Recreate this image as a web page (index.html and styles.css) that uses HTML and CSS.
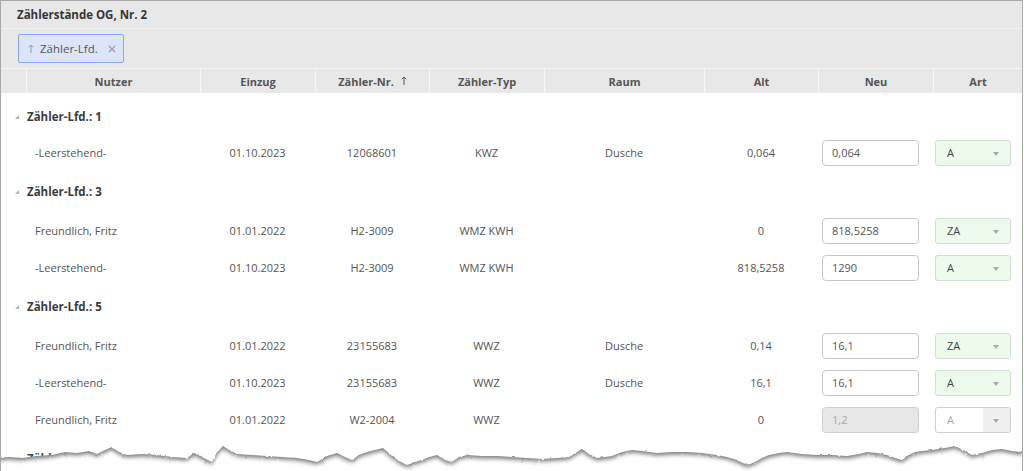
FILE: index.html
```html
<!DOCTYPE html>
<html lang="de">
<head>
<meta charset="utf-8">
<title>Zählerstände</title>
<link rel="stylesheet" href="styles.css">
</head>
<body>
<div class="sheet">
  <div class="title">Zählerstände OG, Nr. 2</div>
  <div class="groupbar">
    <span class="chip">
      <svg class="up" width="6" height="9" viewBox="0 0 6 9"><path d="M3 1 V9 M0.8 3.2 L3 1 L5.2 3.2" fill="none" stroke="#9a9a9a" stroke-width="1"/></svg>
      <span class="chip-label">Zähler-Lfd.</span>
      <svg class="x" width="8" height="8" viewBox="0 0 8 8"><path d="M1 1 L7 7 M7 1 L1 7" stroke="#a0a0a0" stroke-width="1.4"/></svg>
    </span>
  </div>
  <table class="grid">
    <colgroup>
      <col class="c0"><col class="c1"><col class="c2"><col class="c3"><col class="c4"><col class="c5"><col class="c6"><col class="c7"><col class="c8">
    </colgroup>
    <thead>
      <tr>
        <th class="first"></th>
        <th>Nutzer</th>
        <th>Einzug</th>
        <th>Zähler-Nr. <svg class="sort" width="6" height="9" viewBox="0 0 6 9"><path d="M3 1 V9 M0.8 3.2 L3 1 L5.2 3.2" fill="none" stroke="#555" stroke-width="1"/></svg></th>
        <th>Zähler-Typ</th>
        <th>Raum</th>
        <th>Alt</th>
        <th>Neu</th>
        <th>Art</th>
      </tr>
    </thead>
    <tbody>
      <tr class="grp top"><td colspan="9"><div class="gl"><span class="tri"></span>Zähler-Lfd.: 1</div></td></tr>
      <tr>
        <td></td><td class="name">-Leerstehend-</td><td>01.10.2023</td><td>12068601</td><td>KWZ</td><td>Dusche</td><td>0,064</td>
        <td class="neu"><div class="inp">0,064</div></td>
        <td class="art"><div class="sel"><span>A</span><span class="arrow"></span></div></td>
      </tr>
      <tr class="grp"><td colspan="9"><div class="gl"><span class="tri"></span>Zähler-Lfd.: 3</div></td></tr>
      <tr>
        <td></td><td class="name">Freundlich, Fritz</td><td>01.01.2022</td><td>H2-3009</td><td>WMZ KWH</td><td></td><td>0</td>
        <td class="neu"><div class="inp">818,5258</div></td>
        <td class="art"><div class="sel"><span>ZA</span><span class="arrow"></span></div></td>
      </tr>
      <tr>
        <td></td><td class="name">-Leerstehend-</td><td>01.10.2023</td><td>H2-3009</td><td>WMZ KWH</td><td></td><td>818,5258</td>
        <td class="neu"><div class="inp">1290</div></td>
        <td class="art"><div class="sel"><span>A</span><span class="arrow"></span></div></td>
      </tr>
      <tr class="grp"><td colspan="9"><div class="gl"><span class="tri"></span>Zähler-Lfd.: 5</div></td></tr>
      <tr>
        <td></td><td class="name">Freundlich, Fritz</td><td>01.01.2022</td><td>23155683</td><td>WWZ</td><td>Dusche</td><td>0,14</td>
        <td class="neu"><div class="inp">16,1</div></td>
        <td class="art"><div class="sel"><span>ZA</span><span class="arrow"></span></div></td>
      </tr>
      <tr>
        <td></td><td class="name">-Leerstehend-</td><td>01.10.2023</td><td>23155683</td><td>WWZ</td><td>Dusche</td><td>16,1</td>
        <td class="neu"><div class="inp">16,1</div></td>
        <td class="art"><div class="sel"><span>A</span><span class="arrow"></span></div></td>
      </tr>
      <tr>
        <td></td><td class="name">Freundlich, Fritz</td><td>01.01.2022</td><td>W2-2004</td><td>WWZ</td><td></td><td>0</td>
        <td class="neu"><div class="inp disabled">1,2</div></td>
        <td class="art"><div class="sel disabled"><span>A</span><span class="arrow"></span></div></td>
      </tr>
      <tr class="grp"><td colspan="9"><div class="gl"><span class="tri"></span>Zähler-Lfd.: 6</div></td></tr>
    </tbody>
  </table>
  <svg class="tear" width="1030" height="40" viewBox="0 0 1030 40">
    <defs>
      <filter id="rough" x="-2%" y="-40%" width="104%" height="180%">
        <feTurbulence type="fractalNoise" baseFrequency="0.25 0.12" numOctaves="2" seed="4" result="n"/>
        <feDisplacementMap in="SourceGraphic" in2="n" scale="2.2" xChannelSelector="R" yChannelSelector="G"/>
      </filter>
      <filter id="soft" x="-2%" y="-50%" width="104%" height="200%"><feGaussianBlur stdDeviation="2"/></filter>
      <path id="edge" d="M-4,23 L0,23 L12,22 L25,23 L40,21 L55,20 L68,17 L80,18 L92,16 L100,19 L108,15 L115,12 L122,17 L130,20 L145,19 L160,20 L175,22 L190,23 L197,18 L205,22 L215,27 L220,17 L226,11 L232,15 L240,19 L255,20 L270,21 L285,22 L300,23 L312,25 L320,27 L330,21 L340,18 L348,22 L355,25 L362,20 L370,17 L378,15 L386,13 L394,20 L402,26 L410,30 L418,27 L425,25 L432,22 L440,20 L448,25 L455,27 L462,22 L470,20 L485,21 L500,21 L515,22 L530,23 L545,24 L560,23 L572,22 L580,17 L585,14 L592,19 L600,23 L608,22 L615,21 L625,17 L635,15 L645,16 L660,18 L675,17 L690,17 L705,18 L720,20 L730,22 L740,25 L750,30 L758,27 L765,23 L772,20 L782,18 L790,17 L805,19 L820,20 L835,20 L850,21 L862,19 L870,17 L880,18 L890,20 L898,23 L905,25 L912,20 L918,17 L925,16 L935,15 L948,13 L958,11 L966,15 L975,20 L985,18 L995,15 L1005,14 L1015,16 L1024,17 L1034,17 L1034,44 L-4,44 Z"/>
    </defs>
    <g filter="url(#rough)">
      <use href="#edge" fill="#7a7a7a"/>
      <use href="#edge" fill="#fff" transform="translate(0,2.5)" filter="url(#soft)"/>
      <use href="#edge" fill="#fff" transform="translate(0,8)"/>
    </g>
  </svg>
</div>
</body>
</html>
```

FILE: styles.css
```css
html, body {
  margin: 0;
  padding: 0;
  overflow: hidden;
  background: #fff;
}

.sheet {
  position: relative;
  width: 1021px;
  height: 470px;
  border: 1px solid #a9a9a9;
  border-bottom: 0;
  overflow: hidden;
  background: #fff;
  font-family: "Open Sans", "Liberation Sans", sans-serif;
  font-size: 11px;
  color: #555;
}

.title {
  height: 27px;
  line-height: 27px;
  padding-left: 16px;
  background: #e8e8e8;
  border-bottom: 1px solid #f1f1f1;
  font-weight: 700;
  font-size: 11.5px;
  color: #363636;
}

.groupbar {
  height: 39px;
  box-sizing: border-box;
  padding: 5px 0 0 17px;
  background: #e8e8e8;
}

.chip {
  display: inline-flex;
  align-items: center;
  height: 29px;
  box-sizing: border-box;
  padding: 0 7px 0 9px;
  border: 1px solid #8ca7f6;
  border-radius: 2px;
  background: #dde5fb;
  color: #555;
  font-size: 11.5px;
}

.chip .up {
  margin-right: 6px;
}

.chip .x {
  margin-left: 10px;
}

.grid {
  width: 1021px;
  table-layout: fixed;
  border-collapse: separate;
  border-spacing: 0;
}

.c0 { width: 25px; }
.c1 { width: 174px; }
.c2 { width: 115px; }
.c3 { width: 114px; }
.c4 { width: 115px; }
.c5 { width: 160px; }
.c6 { width: 114px; }
.c7 { width: 115px; }
.c8 { width: 89px; }

.grid th {
  height: 24px;
  padding: 0;
  background: #e8e8e8;
  border-top: 1px solid #f6f6f6;
  border-left: 1px solid #f6f6f6;
  font-weight: 700;
  font-size: 11px;
  color: #555;
  text-align: center;
  vertical-align: middle;
}

.grid th.first {
  border-left: 0;
}

.grid th .sort {
  margin-left: 4px;
  vertical-align: 1px;
}

.grid td {
  height: 37px;
  padding: 0;
  text-align: center;
  vertical-align: middle;
  white-space: nowrap;
}

.grid td.name {
  text-align: left;
  padding-left: 9px;
}

.grp td {
  height: 41px;
  vertical-align: top;
  text-align: left;
}

.gl {
  display: flex;
  align-items: center;
  padding-top: 13px;
  padding-left: 14px;
  line-height: 15px;
  font-weight: 700;
  font-size: 11.5px;
  color: #3c3c3c;
}

.grp.top .gl {
  padding-top: 16px;
}

.tri {
  width: 0;
  height: 0;
  border-bottom: 4px solid #b0b0b0;
  border-left: 4px solid transparent;
  margin-right: 8px;
  margin-top: 1px;
}

.grid td.neu,
.grid td.art {
  text-align: left;
}

.inp {
  margin-left: 4px;
  width: 97px;
  height: 26px;
  box-sizing: border-box;
  border: 1px solid #c8c8c8;
  border-radius: 4px;
  padding-left: 9px;
  display: flex;
  align-items: center;
  background: #fff;
  color: #555;
}

.inp.disabled {
  background: #e7e7e7;
  border-color: #cfcfcf;
  color: #a8a8a8;
}

.sel {
  margin-left: 2px;
  width: 76px;
  height: 26px;
  box-sizing: border-box;
  border: 1px solid #cfe2cf;
  border-radius: 3px;
  background: #edfbed;
  padding-left: 11px;
  display: flex;
  align-items: center;
  justify-content: space-between;
  color: #444;
  overflow: hidden;
}

.sel .arrow {
  width: 27px;
  height: 100%;
  position: relative;
}

.sel .arrow::after {
  content: "";
  position: absolute;
  left: 10px;
  top: 11px;
  border-top: 4px solid #a8a8a8;
  border-left: 3px solid transparent;
  border-right: 3px solid transparent;
}

.sel.disabled {
  background: #fff;
  border-color: #cfcfcf;
  color: #a8a8a8;
}

.sel.disabled .arrow {
  background: #f0f0f0;
}

.tear {
  position: absolute;
  left: -4px;
  top: 434px;
}
```
